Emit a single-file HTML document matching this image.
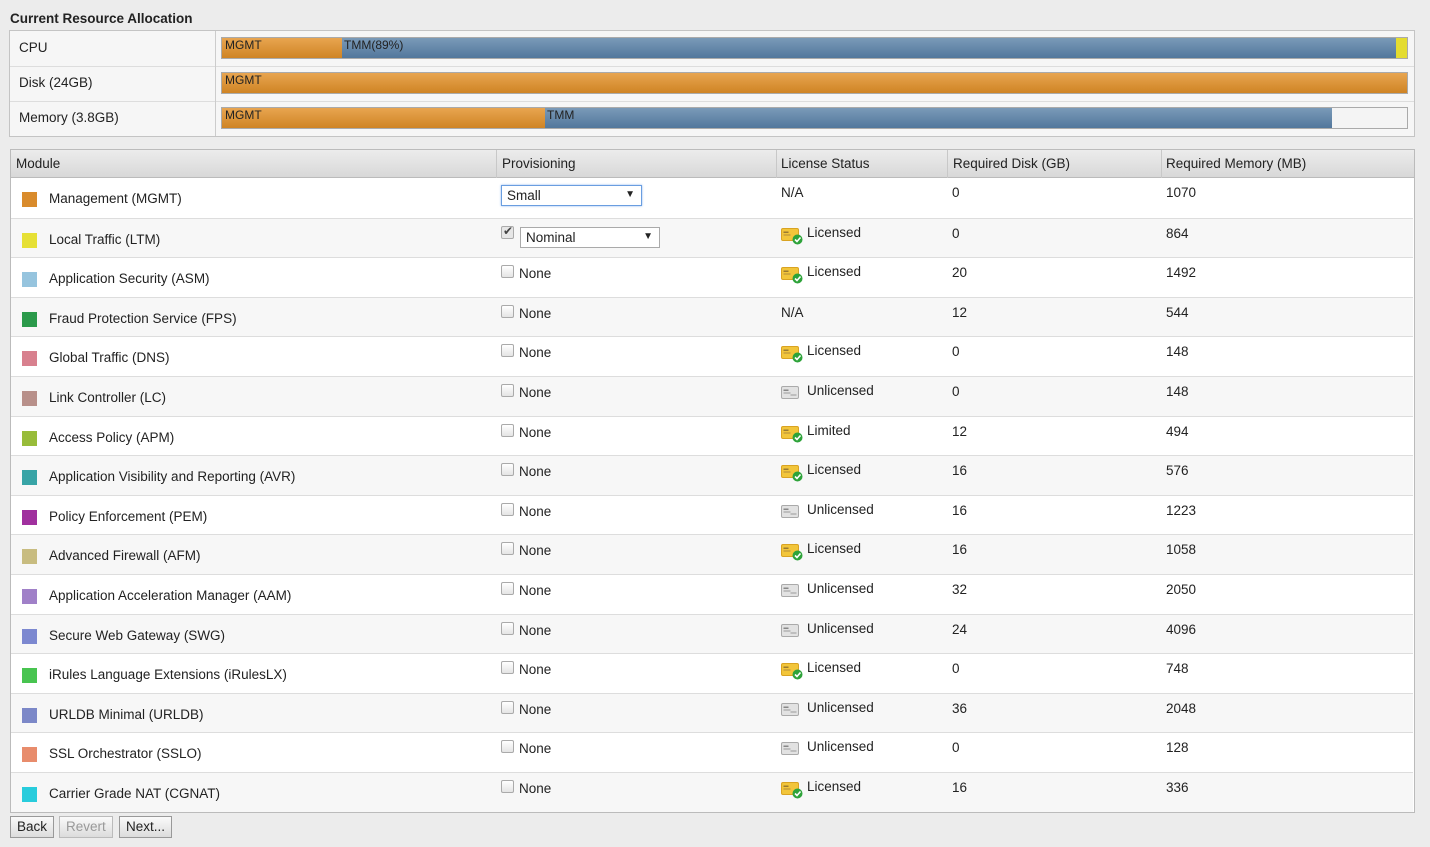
<!DOCTYPE html>
<html><head><meta charset="utf-8"><style>
*{margin:0;padding:0;box-sizing:border-box}
body{width:1430px;height:847px;background:#ececec;font-family:"Liberation Sans",Arial,sans-serif;font-size:13px;color:#222;position:relative;overflow:hidden}
.a{position:absolute;white-space:nowrap}
.bar{position:absolute;height:22px;border:1px solid #aaa;background:#f4f4f4}
.o{position:absolute;top:0;bottom:0;background:linear-gradient(#e8a550,#cf8424)}
.b{position:absolute;top:0;bottom:0;background:linear-gradient(#7a9ab8,#52779c)}
.bl{position:absolute;top:0;left:3px;font-size:12px;line-height:15px;color:#222}
.row{position:absolute;left:11px;width:1402px;height:40px;border-top:1px solid #ddd}
.sw{position:absolute;left:11px;top:14px;width:15px;height:15px}
.cb{position:absolute;left:490px;top:7px;width:13px;height:13px;border:1px solid #aaa;border-radius:2px;background:linear-gradient(#fff,#e4e4e4)}
.t{position:absolute;font-size:13.5px}
.btn{position:absolute;top:816px;height:22px;border:1px solid #999;background:linear-gradient(#fafafa,#dcdcdc);font-size:13.5px;line-height:20px;padding:0 6px}
</style></head><body>
<div class="a" style="left:10px;top:11px;font-weight:bold;font-size:13.5px">Current Resource Allocation</div>
<div class="a" style="left:9px;top:30px;width:1406px;height:107px;border:1px solid #c4c4c4;background:#f6f6f6"></div>
<div class="a" style="left:10px;top:66px;width:1404px;border-top:1px solid #ddd"></div>
<div class="a" style="left:10px;top:101px;width:1404px;border-top:1px solid #ddd"></div>
<div class="a" style="left:215px;top:31px;height:105px;border-left:1px solid #ccc"></div>
<div class="a" style="left:19px;top:40px;font-size:13.5px">CPU</div>
<div class="a" style="left:19px;top:75px;font-size:13.5px">Disk (24GB)</div>
<div class="a" style="left:19px;top:110px;font-size:13.5px">Memory (3.8GB)</div>
<div class="bar" style="left:221px;top:37px;width:1187px"><div class="o" style="left:0;width:120px"></div><div class="b" style="left:120px;width:1054px"></div><div style="position:absolute;left:1174px;right:0;top:0;bottom:0;background:#e4dc30"></div><span class="bl">MGMT</span><span class="bl" style="left:122px">TMM(89%)</span></div>
<div class="bar" style="left:221px;top:72px;width:1187px"><div class="o" style="left:0;right:0"></div><span class="bl">MGMT</span></div>
<div class="bar" style="left:221px;top:107px;width:1187px"><div class="o" style="left:0;width:323px"></div><div class="b" style="left:323px;width:787px"></div><span class="bl">MGMT</span><span class="bl" style="left:325px">TMM</span></div>

<div class="a" style="left:10px;top:149px;width:1405px;height:664px;border:1px solid #bbb;background:#fff"></div>
<div class="a" style="left:11px;top:150px;width:1403px;height:28px;background:linear-gradient(#ececec,#d8d8d8);border-bottom:1px solid #bbb"></div>
<div class="a" style="left:496px;top:150px;height:28px;border-left:1px solid #c8c8c8"></div>
<div class="a" style="left:776px;top:150px;height:28px;border-left:1px solid #c8c8c8"></div>
<div class="a" style="left:947px;top:150px;height:28px;border-left:1px solid #c8c8c8"></div>
<div class="a" style="left:1161px;top:150px;height:28px;border-left:1px solid #c8c8c8"></div>
<div class="a" style="left:16px;top:156px;font-size:13.5px">Module</div>
<div class="a" style="left:502px;top:156px;font-size:13.5px">Provisioning</div>
<div class="a" style="left:781px;top:156px;font-size:13.5px">License Status</div>
<div class="a" style="left:953px;top:156px;font-size:13.5px">Required Disk (GB)</div>
<div class="a" style="left:1166px;top:156px;font-size:13.5px">Required Memory (MB)</div>

<svg width="0" height="0" style="position:absolute"><defs>
<g id="lic"><rect x="0" y="0" width="17" height="12" rx="1.5" fill="#f2c53a" stroke="#d9a322"/><rect x="2" y="3" width="5" height="1.5" fill="#9a7a30"/><rect x="2" y="6" width="7" height="1" fill="#b08a3a"/><circle cx="16" cy="11" r="5" fill="#2ea33a"/><path d="M13.5 11l2 2 3.5-4" stroke="#fff" stroke-width="1.6" fill="none"/></g>
<g id="unl"><rect x="0" y="0" width="17" height="12" rx="1.5" fill="#e2e2e2" stroke="#aaa"/><rect x="2" y="3" width="5" height="1.5" fill="#888"/><rect x="2" y="6" width="7" height="1" fill="#999"/><rect x="9" y="8" width="6" height="1" fill="#999"/></g>
</defs></svg>

<div id="rows"></div>
<script>
var d=[["Management (MGMT)","#d98b2c","S","N/A","0","1070"],
["Local Traffic (LTM)","#e6e035","N","L","0","864"],
["Application Security (ASM)","#96c4de","","L","20","1492"],
["Fraud Protection Service (FPS)","#2b9a4b","","N/A","12","544"],
["Global Traffic (DNS)","#d8808e","","L","0","148"],
["Link Controller (LC)","#b8908a","","U","0","148"],
["Access Policy (APM)","#98bc3a","","Limited","12","494"],
["Application Visibility and Reporting (AVR)","#38a4a6","","L","16","576"],
["Policy Enforcement (PEM)","#a0309e","","U","16","1223"],
["Advanced Firewall (AFM)","#c8bc80","","L","16","1058"],
["Application Acceleration Manager (AAM)","#a080c8","","U","32","2050"],
["Secure Web Gateway (SWG)","#7c88d0","","U","24","4096"],
["iRules Language Extensions (iRulesLX)","#48c450","","L","0","748"],
["URLDB Minimal (URLDB)","#7c88c8","","U","36","2048"],
["SSL Orchestrator (SSLO)","#e88c6c","","U","0","128"],
["Carrier Grade NAT (CGNAT)","#28ccdc","","L","16","336"]];
var h="";
d.forEach(function(r,i){
var top=178+i*39.6;
h+='<div class="row" style="top:'+top+'px;background:'+(i%2?'#f7f7f7':'#fff')+';'+(i==0?'border-top:none':'')+'">';
h+='<div class="sw" style="background:'+r[1]+'"></div><div class="t" style="left:38px;top:13px">'+r[0]+'</div>';
if(r[2]=="S"){h+='<div style="position:absolute;left:490px;top:7px;width:141px;height:21px;border:1px solid #6a9ee0;box-shadow:0 0 2px #8ab4ee;background:#fff"><span class="t" style="left:5px;top:2px">Small</span><span style="position:absolute;right:6px;top:3px;font-size:10px">▼</span></div>';}
else if(r[2]=="N"){h+='<div class="cb" style="background:#e6e6e6"><span style="position:absolute;left:1px;top:-3px;font-size:12px;color:#444">✔</span></div><div style="position:absolute;left:509px;top:8px;width:140px;height:21px;border:1px solid #aaa;background:#fff"><span class="t" style="left:5px;top:2px">Nominal</span><span style="position:absolute;right:6px;top:3px;font-size:10px">▼</span></div>';}
else{h+='<div class="cb"></div><div class="t" style="left:508px;top:8px">None</div>';}
var lx=770;
if(r[3]=="N/A")h+='<div class="t" style="left:'+lx+'px;top:7px">N/A</div>';
else if(r[3]=="U")h+='<svg style="position:absolute;left:'+lx+'px;top:9px" width="24" height="18"><use href="#unl" x="0.5" y="0.5"/></svg><div class="t" style="left:'+(lx+26)+'px;top:6px">Unlicensed</div>';
else h+='<svg style="position:absolute;left:'+lx+'px;top:9px" width="24" height="18"><use href="#lic" x="0.5" y="0.5"/></svg><div class="t" style="left:'+(lx+26)+'px;top:6px">'+(r[3]=="L"?"Licensed":"Limited")+'</div>';
h+='<div class="t" style="left:941px;top:7px">'+r[4]+'</div><div class="t" style="left:1155px;top:7px">'+r[5]+'</div></div>';
});
document.getElementById("rows").innerHTML=h;
</script>
<div class="btn" style="left:10px">Back</div>
<div class="btn" style="left:59px;color:#999;border-color:#bbb">Revert</div>
<div class="btn" style="left:119px">Next...</div>
</body></html>
